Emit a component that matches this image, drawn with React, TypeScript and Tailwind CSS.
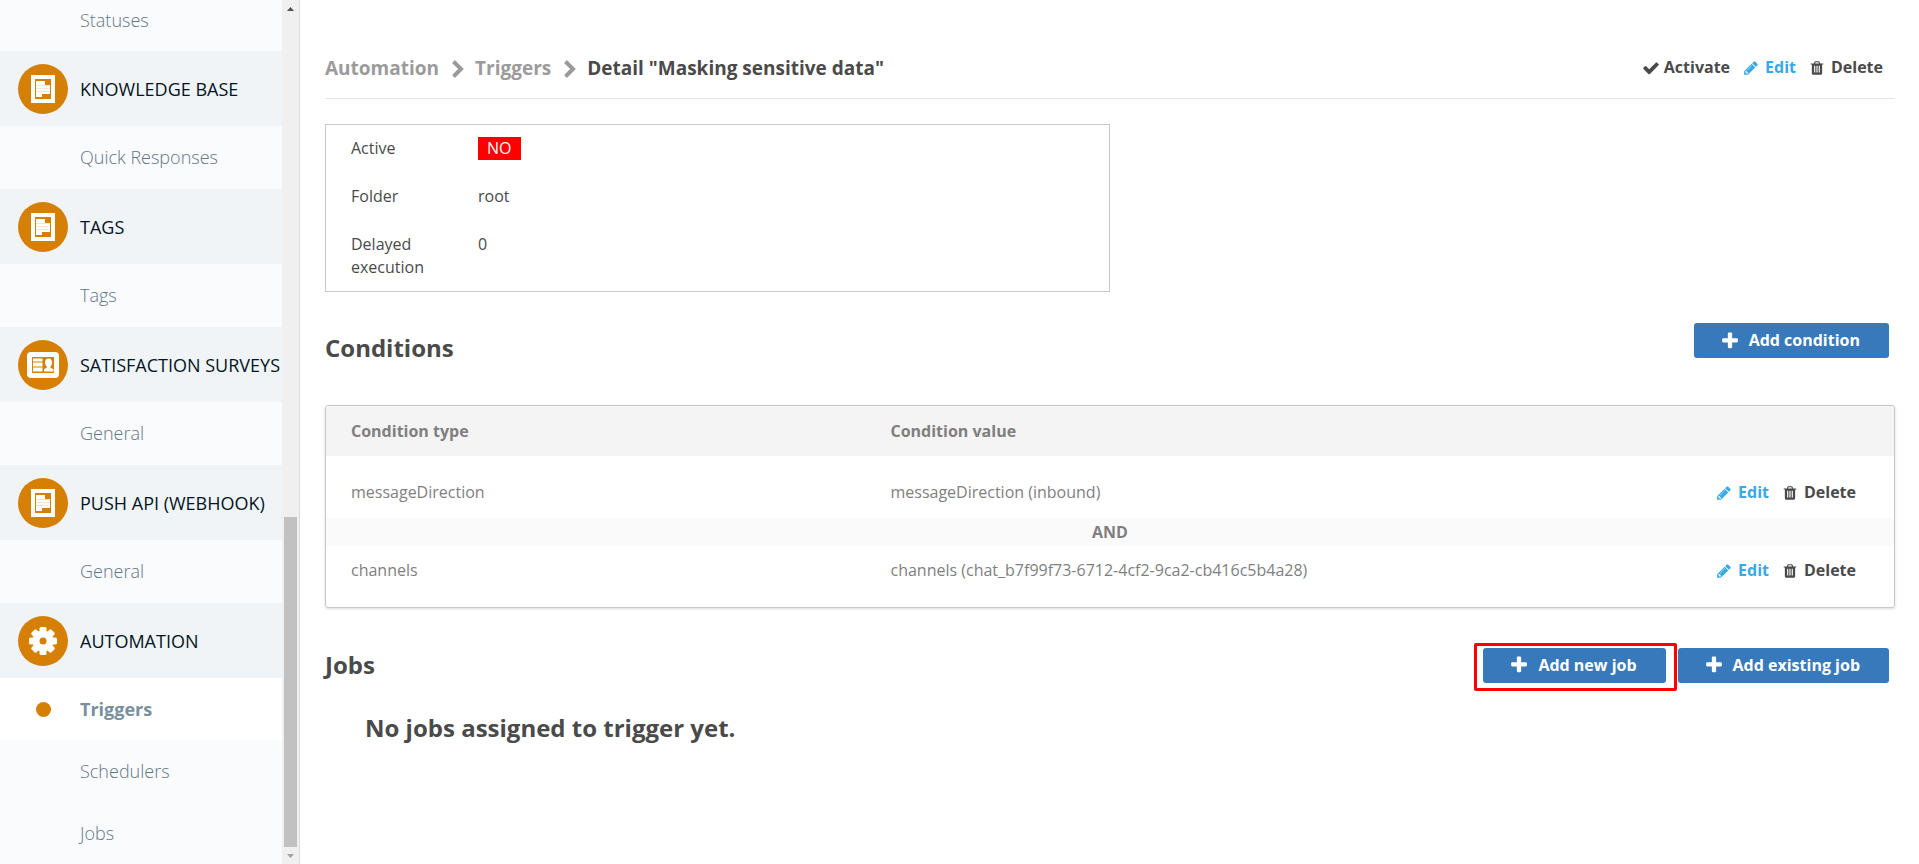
import clsx from "clsx";

type IconProps = { className?: string };

const Icons = {
  document: () => (
    <svg viewBox="0 0 24 28" className="h-7 w-6" fill="none">
      <path d="M0 0h24v28H0z" fill="#fff" />
      <path d="M4 4h16v20H4z" fill="#d67f05" />
      <path d="M5 6h9v4h5v9h-8v3H5z" fill="#fff" />
      <path d="M5 10.5h13M5 13.5h13M5 16.5h13" stroke="#fbe6c8" strokeWidth="1" />
    </svg>
  ),
  survey: () => (
    <svg viewBox="0 0 32 26" className="h-[26px] w-8" fill="none">
      <rect width="32" height="26" rx="4" fill="#fff" />
      <path d="M5 5h22v16H5z" fill="#d67f05" />
      <path d="M6 6.5h9.500v3H6zM6 10.500h9.500v4H6zM6 15.500h9.500v4H6z" fill="#fff" />
      <path d="M21.500 6.500c2.500 0 3.700 1.800 3.700 4 0 1.700-.7 3-1.700 3.800v1.400l3 1.500v2.300H17v-2.300l2.700-1.500v-1.400c-1-.8-1.700-2.100-1.700-3.800 0-2.200 1-4 3.500-4z" fill="#fff" />
    </svg>
  ),
  gear: () => (
    <svg viewBox="0 0 28 28" className="size-7" fill="#fff">
      {[0, 45, 90, 135].map((angle) => (
        <rect key={angle} x="10.5" width="7" height="28" rx="1.500" transform={`rotate(${angle} 14 14)`} />
      ))}
      <circle cx="14" cy="14" r="10.500" />
      <circle cx="14" cy="14" r="3.500" fill="#d67f05" />
    </svg>
  ),
  check: ({ className }: IconProps) => (
    <svg viewBox="0 0 1792 1792" className={className} fill="currentColor">
      <path d="M1671 566q0 40-28 68l-724 724-136 136q-28 28-68 28t-68-28l-136-136-362-362q-28-28-28-68t28-68l136-136q28-28 68-28t68 28l294 295 656-657q28-28 68-28t68 28l136 136q28 28 28 68z" />
    </svg>
  ),
  pencil: ({ className }: IconProps) => (
    <svg viewBox="0 0 1792 1792" className={className} fill="currentColor">
      <path d="M491 1536l91-91-235-235-91 91v107h128v128h107zm523-928q0-22-22-22-10 0-17 7l-542 542q-7 7-7 17 0 22 22 22 10 0 17-7l542-542q7-7 7-17zm-54-192l416 416-832 832h-416v-416zm683 96q0 53-37 90l-166 166-416-416 166-165q36-38 90-38 53 0 91 38l235 234q37 39 37 91z" />
    </svg>
  ),
  trash: ({ className }: IconProps) => (
    <svg viewBox="0 0 1792 1792" className={className} fill="currentColor">
      <path d="M704 1376v-704q0-14-9-23t-23-9h-64q-14 0-23 9t-9 23v704q0 14 9 23t23 9h64q14 0 23-9t9-23zm256 0v-704q0-14-9-23t-23-9h-64q-14 0-23 9t-9 23v704q0 14 9 23t23 9h64q14 0 23-9t9-23zm256 0v-704q0-14-9-23t-23-9h-64q-14 0-23 9t-9 23v704q0 14 9 23t23 9h64q14 0 23-9t9-23zm-544-992h448l-48-117q-7-9-17-11h-317q-10 2-17 11zm928 32v64q0 14-9 23t-23 9h-96v948q0 83-47 143.500t-113 60.500h-832q-66 0-113-58.500t-47-141.500v-952h-96q-14 0-23-9t-9-23v-64q0-14 9-23t23-9h309l70-167q15-37 54-63t79-26h320q40 0 79 26t54 63l70 167h309q14 0 23 9t9 23z" />
    </svg>
  ),
  plus: ({ className }: IconProps) => (
    <svg viewBox="0 0 1792 1792" className={className} fill="currentColor">
      <path d="M1600 736v192q0 40-28 68t-68 28h-416v416q0 40-28 68t-68 28h-192q-40 0-68-28t-28-68v-416h-416q-40 0-68-28t-28-68v-192q0-40 28-68t68-28h416v-416q0-40 28-68t68-28h192q40 0 68 28t28 68v416h416q40 0 68 28t28 68z" />
    </svg>
  ),
  chevron: () => (
    <svg viewBox="0 0 14 18" className="h-[18px] w-[14px]" fill="none" stroke="currentColor" strokeWidth="4">
      <path d="M3.500 1.500L11 9l-7.500 7.500" />
    </svg>
  ),
};

const sections = [
  { title: "Knowledge base", icon: Icons.document, items: ["Quick Responses"] },
  { title: "Tags", icon: Icons.document, items: ["Tags"] },
  { title: "Satisfaction surveys", icon: Icons.survey, items: ["General"] },
  { title: "Push API (Webhook)", icon: Icons.document, items: ["General"] },
  { title: "Automation", icon: Icons.gear, items: ["Triggers", "Schedulers", "Jobs"] },
];

const conditions = [
  { type: "messageDirection", value: "messageDirection (inbound)" },
  { type: "channels", value: "channels (chat_b7f99f73-6712-4cf2-9ca2-cb416c5b4a28)" },
];

export default function App() {
  return (
    <div className="flex h-screen overflow-hidden bg-white font-['Open_Sans',sans-serif] text-base leading-[23px] text-[#4a4a4a]">
      <Sidebar />
      <main className="min-w-0 flex-1 pr-6 pl-[25px]">
        <PageHeader />
        <Summary />
        <Conditions />
        <Jobs />
      </main>
    </div>
  );
}

function Sidebar() {
  return (
    <aside className="flex w-[300px] shrink-0 border-r border-[#dcdcdc] bg-[#fafbfd]">
      <nav className="-mt-[11px] min-w-0 flex-1">
        <NavItem label="Statuses" />
        {sections.map((section) => (
          <section key={section.title} className="pb-px">
            <h2 className="flex h-[75px] items-center gap-3 bg-[#f0f4f7] pl-[18px] text-lg whitespace-nowrap text-[#04151f] uppercase">
              <span className="flex size-[50px] shrink-0 items-center justify-center rounded-full bg-[#d67f05]">
                <section.icon />
              </span>
              {section.title}
            </h2>
            {section.items.map((item) => (
              <NavItem key={item} label={item} active={item === "Triggers"} />
            ))}
          </section>
        ))}
      </nav>
      <Scrollbar />
    </aside>
  );
}

function NavItem({ label, active }: { label: string; active?: boolean }) {
  return (
    <a
      href="#"
      className={clsx(
        "flex h-[62px] items-center gap-3 pl-[18px] text-lg",
        active ? "bg-white font-bold text-[#778f9e]" : "font-light text-[#627786]"
      )}
    >
      <span className="flex w-[50px] justify-center">
        {active && <span className="size-[15px] rounded-full bg-[#d67f05]" />}
      </span>
      {label}
    </a>
  );
}

function Scrollbar() {
  return (
    <div className="flex w-[17px] flex-col items-center bg-[#f0f0f0]">
      <svg viewBox="0 0 17 17" className="size-[17px]">
        <path d="M5 11l3.500-4 3.500 4z" fill="#505050" />
      </svg>
      <div className="flex-[501]" />
      <div className="w-[13px] flex-[330] bg-[#c1c1c1]" />
      <svg viewBox="0 0 17 17" className="size-[17px]">
        <path d="M5 7l3.500 4 3.500-4z" fill="#a3a3a3" />
      </svg>
    </div>
  );
}

function PageHeader() {
  return (
    <header className="flex items-center justify-between border-b border-[#e5e5e5] pt-14 pr-3 pb-[17px]">
      <nav className="flex items-center gap-[11px] text-[19px] leading-[25px] font-bold text-[#9b9b9b]">
        <a href="#">Automation</a>
        <Icons.chevron />
        <a href="#">Triggers</a>
        <Icons.chevron />
        <h1 className="text-[#4a4a4a]">Detail "Masking sensitive data"</h1>
      </nav>
      <div className="flex gap-[13px] pb-[2px] font-bold">
        <a href="#" className="flex items-center gap-1">
          <Icons.check className="size-[18px]" />
          Activate
        </a>
        <RowActions />
      </div>
    </header>
  );
}

function RowActions() {
  return (
    <div className="flex justify-end gap-[13px] font-bold">
      <a href="#" className="flex items-center gap-[6px] text-[#36a9e6]">
        <Icons.pencil className="size-4" />
        Edit
      </a>
      <a href="#" className="flex items-center gap-[6px] text-[#4a4a4a]">
        <Icons.trash className="size-4" />
        Delete
      </a>
    </div>
  );
}

function Summary() {
  return (
    <dl className="mt-[25px] grid w-1/2 grid-cols-[127px_1fr] gap-y-[25px] border border-[#c8c8c8] px-[25px] py-3">
      <dt className="pr-6">Active</dt>
      <dd>
        <span className="inline-block bg-[#ff0000] px-[9px] text-white">NO</span>
      </dd>
      <dt className="pr-6">Folder</dt>
      <dd>root</dd>
      <dt className="pr-6">Delayed execution</dt>
      <dd>0</dd>
    </dl>
  );
}

function AddButton({ label }: { label: string }) {
  return (
    <button className="flex h-[35px] items-center gap-[9px] rounded-[3px] bg-[#3879bb] pr-[29px] pl-[26px] font-bold text-white">
      <Icons.plus className="size-5" />
      {label}
    </button>
  );
}

function Conditions() {
  return (
    <section>
      <div className="mt-[31px] flex items-start justify-between pr-[6px]">
        <h2 className="mt-[7px] text-2xl leading-9 font-bold">Conditions</h2>
        <AddButton label="Add condition" />
      </div>
      <div className="mt-[39px] overflow-hidden rounded-[3px] border border-[#c8c8c8] shadow-[0_1px_3px_rgba(0,0,0,0.15)]">
        <table className="w-full table-fixed text-left text-[#7f7f7f]">
          <colgroup>
            <col className="w-[36%]" />
            <col />
            <col className="w-[200px]" />
          </colgroup>
          <thead className="h-[50px] bg-[#f4f4f4]">
            <tr>
              <th className="pl-[25px]">Condition type</th>
              <th>Condition value</th>
              <th />
            </tr>
          </thead>
          <tbody>
            <ConditionRow {...conditions[0]} className="pt-[25px] pb-[14px]" />
            <tr className="h-7 bg-[#fafafa]">
              <td colSpan={3} className="text-center font-bold">
                AND
              </td>
            </tr>
            <ConditionRow {...conditions[1]} className="pt-[13px] pb-[25px]" />
          </tbody>
        </table>
      </div>
    </section>
  );
}

type ConditionRowProps = {
  type: string;
  value: string;
  className: string;
};

function ConditionRow({ type, value, className }: ConditionRowProps) {
  return (
    <tr>
      <td className={clsx("pl-[25px]", className)}>{type}</td>
      <td className={className}>{value}</td>
      <td className={clsx("pr-[38px]", className)}>
        <RowActions />
      </td>
    </tr>
  );
}

function Jobs() {
  return (
    <section>
      <div className="mt-[39px] flex items-center justify-between pr-[6px]">
        <h2 className="text-2xl leading-9 font-bold">Jobs</h2>
        <div className="flex gap-3">
          <div className="relative">
            <AddButton label="Add new job" />
            <div className="pointer-events-none absolute -top-[5px] -right-[11px] -bottom-2 -left-[9px] rounded-[2px] border-[3px] border-[#ff0000]" />
          </div>
          <AddButton label="Add existing job" />
        </div>
      </div>
      <p className="mt-[27px] pl-10 text-2xl leading-9 font-bold">No jobs assigned to trigger yet.</p>
    </section>
  );
}
